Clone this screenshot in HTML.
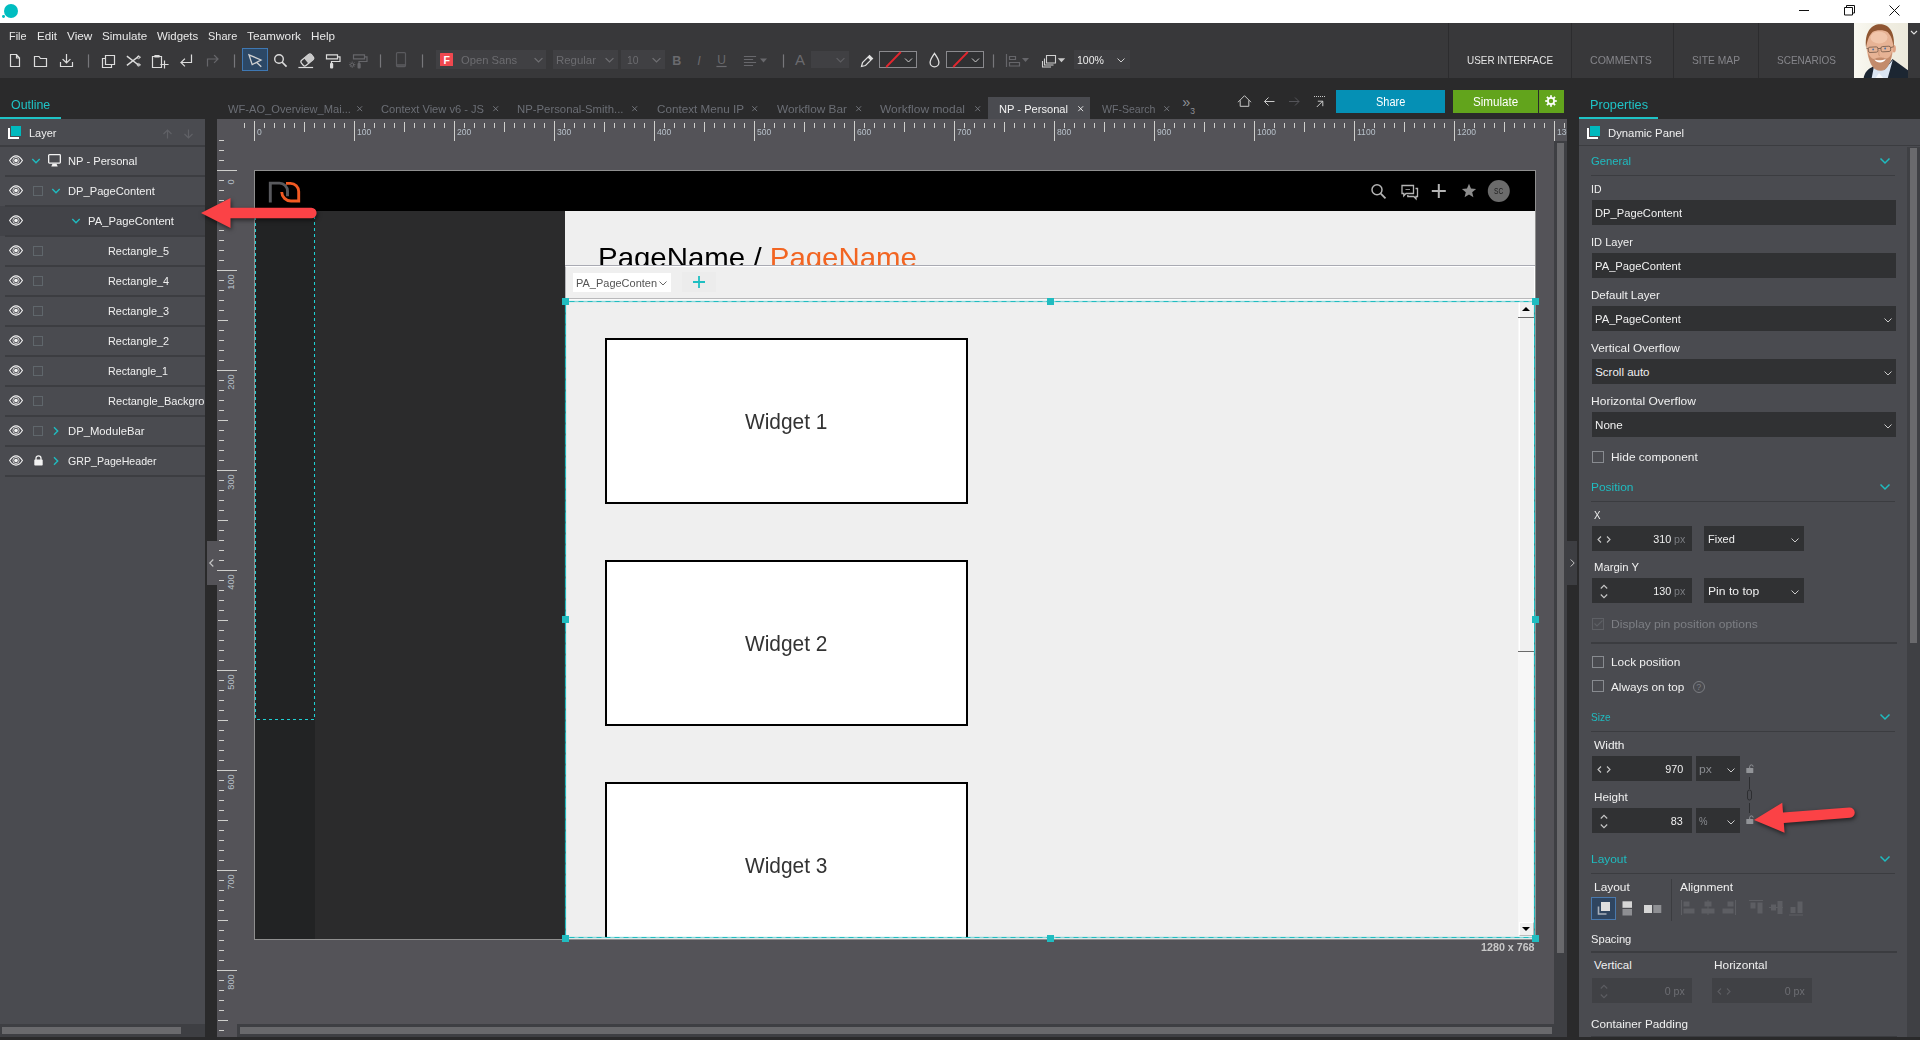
<!DOCTYPE html>
<html lang="en">
<head>
<meta charset="utf-8">
<title>NP - Personal</title>
<style>
*{box-sizing:border-box;margin:0;padding:0}
html,body{width:1920px;height:1040px;overflow:hidden;background:#2a2a2b}
body{font-family:"Liberation Sans","DejaVu Sans",sans-serif;font-size:11px;color:#e8e8e8;position:relative}
.a{position:absolute}
.t{position:absolute;white-space:nowrap;line-height:16px;height:16px;transform-origin:0 50%}
svg{position:absolute;overflow:visible}
#titlebar{left:0;top:0;width:1920px;height:23px;background:#fff}
#toolbar{left:0;top:23px;width:1920px;height:55px;background:#38383a}
#tabstrip{left:0;top:78px;width:1920px;height:41px;background:#2a2a2b}
#leftpanel{left:0;top:119px;width:205px;height:921px;background:#4a4b50;overflow:hidden}
#canvas{left:217px;top:119px;width:1350px;height:921px;background:#545358;overflow:hidden}
#rightpanel{left:1579px;top:119px;width:341px;height:921px;background:#4a4b50;overflow:hidden}
.vsep{top:23px;width:1px;height:55px;background:#2c2c2e}
</style>
</head>
<body>
<div id="titlebar" class="a"><div class="a" style="left:3.5px;top:4px;width:14px;height:14px;background:#00bdc0;border-radius:50%"></div><div class="a" style="left:2.2px;top:15px;width:2.8px;height:2.8px;background:#00bdc0;border-radius:50%"></div><svg style="left:1796px;top:0" width="120" height="23" viewBox="0 0 120 23" fill="none" stroke="#111" stroke-width="1"><path d="M3 10.500h10"/><path d="M48.500 7.500h8v7.500h-8z M50.500 7.500v-2h8v7.500h-2"/><path d="M93.500 5.500l10 10 M103.500 5.500l-10 10"/></svg></div>
<div id="toolbar" class="a"></div>
<div class="t" style="top:28.3px;font-size:11.5px;color:#e9e9e9;left:9.4px;transform:scaleX(0.944);">File</div>
<div class="t" style="top:28.3px;font-size:11.5px;color:#e9e9e9;left:37.2px;transform:scaleX(1.009);">Edit</div>
<div class="t" style="top:28.3px;font-size:11.5px;color:#e9e9e9;left:66.9px;transform:scaleX(1.024);">View</div>
<div class="t" style="top:28.3px;font-size:11.5px;color:#e9e9e9;left:101.9px;transform:scaleX(1.012);">Simulate</div>
<div class="t" style="top:28.3px;font-size:11.5px;color:#e9e9e9;left:156.9px;transform:scaleX(0.992);">Widgets</div>
<div class="t" style="top:28.3px;font-size:11.5px;color:#e9e9e9;left:207.7px;transform:scaleX(0.952);">Share</div>
<div class="t" style="top:28.3px;font-size:11.5px;color:#e9e9e9;left:247px;transform:scaleX(1.031);">Teamwork</div>
<div class="t" style="top:28.3px;font-size:11.5px;color:#e9e9e9;left:311px;transform:scaleX(1.015);">Help</div>

<svg style="left:0;top:46px" width="1140" height="28" viewBox="0 46 1140 28" fill="none" stroke="#dcdcdc" stroke-width="1.200" stroke-linecap="square">
  <path d="M10.500 54.500h6l3 3.500v8.500h-9z M16.500 54.500v3.500h3"/>
  <path d="M34.500 66.500v-10h4.500l1.500 2h6v8z"/>
  <path d="M60.500 62.500v4h12v-4 M66.500 54.500v8 M63 59.500l3.500 3.500 3.500-3.500"/>
  <path d="M88.500 55v12" stroke="#77777b"/>
  <path d="M105.500 55.500h9v9h-9z M105.500 58.500h-3v9h9v-3"/>
  <path d="M127.500 56.500l11 8.500 M138.500 56.500l-11 8.500" stroke-width="1.500"/>
  <circle cx="138.600" cy="57.300" r="1.400" stroke-width=".800"/><circle cx="138.600" cy="64.800" r="1.400" stroke-width=".800"/>
  <path d="M152.500 56.500h9v11h-9z M155 55.500h4v1.500h-4z M164.500 61v7 M161 64.500h7"/>
  <path d="M191.500 55v7.500h-10.500 M184.500 59l-3.500 3.500 3.500 3.500"/>
  <path d="M207.500 66v-7h10 M214.500 55.500l3.500 3.500-3.500 3.500" stroke="#66666a"/>
  <path d="M234.500 55v12" stroke="#77777b"/>
  <rect x="242.500" y="48.500" width="25" height="22" fill="#2c4866" stroke="#3f78b3" stroke-width="1"/>
  <path d="M249 54.800L261 60L252.200 64.600Z M256.500 62.200L261.300 66.800" stroke="#d2d2d2" stroke-linejoin="miter" stroke-linecap="butt" stroke-width="1.300"/>
  <circle cx="279" cy="59" r="4.300" stroke-width="1.400"/><path d="M282.500 62.500l3.500 3.500" stroke-width="1.600"/>
  <g transform="rotate(-40 307.300 60)"><rect x="300.800" y="56.600" width="13" height="6.800" rx="2" /><path d="M305.800 56.600h6a2 2 0 0 1 2 2v2.800a2 2 0 0 1-2 2h-6z" fill="#c9c9c9" stroke="none"/></g><path d="M299 67.500h13.500"/>
  <path d="M326.500 54.800h11v4h-11z M337.500 56.800h2.500v4.700h-8.500v2"/><rect x="330" y="63" width="3.200" height="5.600" rx="1" fill="#dcdcdc" stroke="none"/>
  <g stroke="#66666a"><path d="M353.500 54.800h11v4h-11z M364.500 56.800h2.500v4.700h-8v2"/><rect x="357.500" y="63" width="3.200" height="5.600" rx="1" fill="#66666a" stroke="none"/><circle cx="352.200" cy="64.700" r="1.600" stroke-width="1"/><path d="M352.200 61.500v1.200M352.200 66.700v1.200M349 64.700h1.200M354.200 64.700h1.200M350 62.500l.800.800M353.600 66.100l.800.800M354.400 62.500l-.800.800M350.800 66.100l-.800.800" stroke-width=".900" stroke-linecap="butt"/></g>
  <path d="M380.500 55v12" stroke="#77777b"/>
  <rect x="396.500" y="52.600" width="9" height="14" rx="1" stroke="#5a5a5e"/><path d="M397 65h8" stroke="#5a5a5e" stroke-width="1.600" stroke-linecap="butt"/>
  <path d="M422.500 55v12" stroke="#77777b"/>
  <rect x="436" y="50" width="110" height="19" fill="#404043" stroke="none"/>
  <rect x="440" y="53" width="13" height="13" rx=".500" fill="#f0484f" stroke="none"/>
  <path d="M535 58.500l3.500 3.500 3.500-3.500" stroke="#6e6e72"/>
  <rect x="553" y="50" width="65" height="19" fill="#404043" stroke="none"/>
  <path d="M606 58.500l3.500 3.500 3.500-3.500" stroke="#6e6e72"/>
  <rect x="621" y="50" width="44" height="19" fill="#404043" stroke="none"/>
  <path d="M653 58.500l3.500 3.500 3.500-3.500" stroke="#6e6e72"/>
  <path d="M717 66.500h9" stroke="#6a6a6e"/>
  <path d="M744.500 56.500h11 M744.500 59.500h8 M744.500 62.500h11 M744.500 65.500h8" stroke="#68686c"/><path d="M760 58.500h7l-3.500 4z" fill="#68686c" stroke="none"/>
  <path d="M783.500 55v12" stroke="#77777b"/>
  <rect x="811" y="51" width="38" height="17" fill="#404043" stroke="none"/>
  <path d="M837 58.500l3.500 3.500 3.500-3.500" stroke="#5e5e62"/>
  <path d="M861.500 66.500l1-4 7-7 3 3-7 7z" stroke="#e0e0e0"/><path d="M867.600 57.400l1.900-1.900 3 3-1.900 1.900z" fill="#e0e0e0" stroke="none"/>
  <rect x="879.500" y="51.500" width="37" height="16" fill="#303133" stroke="#8a8a8e" stroke-width="1"/><path d="M886.200 67l14.600-15" stroke="#e3262e" stroke-width="1.800" stroke-linecap="butt"/><path d="M905 58.500l3.500 3.500 3.500-3.500" stroke="#cfcfcf" stroke-width="1" stroke-linecap="butt"/>
  <path d="M934.500 53.400c-2.200 3.400-4.400 6.200-4.400 9a4.400 4.400 0 0 0 8.800 0c0-2.800-2.200-5.600-4.400-9z" stroke="#e0e0e0" stroke-width="1.300"/>
  <rect x="946.500" y="51.500" width="37" height="16" fill="#303133" stroke="#8a8a8e" stroke-width="1"/><path d="M953.200 67l14.600-15" stroke="#e3262e" stroke-width="1.800" stroke-linecap="butt"/><path d="M972 58.500l3.500 3.500 3.500-3.500" stroke="#cfcfcf" stroke-width="1" stroke-linecap="butt"/>
  <path d="M993.500 55v12" stroke="#77777b"/>
  <path d="M1006.500 54.500v12 M1009.500 56.500h6v3h-6z M1009.500 62.500h10v3.500h-10z" stroke="#66666a"/><path d="M1022 58h7l-3.500 4z" fill="#66666a" stroke="none"/>
  <path d="M1046.500 55.500h9v7.500h-9z M1044.500 58.500v6.500h9 M1042.500 61v6h8.500" stroke="#cfcfcf" stroke-width="1.100" stroke-linecap="butt"/><path d="M1057.800 58.200h7.400l-3.700 4.100z" fill="#c8c8c8" stroke="none"/>
  <rect x="1074" y="50" width="56" height="19" fill="#3e3e41" stroke="none"/>
  <path d="M1117.500 58.500l3.500 3.500 3.500-3.500" stroke="#cfcfcf" stroke-width="1" stroke-linecap="butt"/>
</svg>
<div class="t" style="top:51.8px;font-size:10.5px;color:#fff;font-weight:bold;left:443.4px;">F</div>
<div class="t" style="top:52px;font-size:11.5px;color:#6c6c70;left:461px;transform:scaleX(0.973);">Open Sans</div>
<div class="t" style="top:52px;font-size:11.5px;color:#6c6c70;left:556px;transform:scaleX(0.993);">Regular</div>
<div class="t" style="top:52px;font-size:11.5px;color:#6c6c70;left:627px;transform:scaleX(0.899);">10</div>
<div class="t" style="top:53px;font-size:12.5px;color:#6a6a6e;font-weight:bold;left:672.3px;">B</div>
<div class="t" style="top:53px;font-size:12.5px;color:#6a6a6e;left:697.2px;font-style:italic;">I</div>
<div class="t" style="top:52.3px;font-size:12px;color:#6a6a6e;left:717.3px;">U</div>
<div class="t" style="top:52.3px;font-size:15px;color:#6a6a6e;left:795px;">A</div>
<div class="t" style="top:52px;font-size:11.5px;color:#eee;left:1077px;transform:scaleX(0.918);">100%</div>
<div class="a vsep" style="left:1448px"></div>
<div class="a vsep" style="left:1571px"></div>
<div class="a vsep" style="left:1673px"></div>
<div class="a vsep" style="left:1758px"></div>
<div class="t" style="top:52px;font-size:11.5px;color:#e4e4e4;left:1467px;transform:scaleX(0.863);">USER INTERFACE</div>
<div class="t" style="top:52px;font-size:11.5px;color:#85858a;left:1590px;transform:scaleX(0.92);">COMMENTS</div>
<div class="t" style="top:52px;font-size:11.5px;color:#85858a;left:1692px;transform:scaleX(0.894);">SITE MAP</div>
<div class="t" style="top:52px;font-size:11.5px;color:#85858a;left:1777px;transform:scaleX(0.871);">SCENARIOS</div>
<svg style="left:1854px;top:23px" width="54" height="55" viewBox="0 0 54 55">
<defs><clipPath id="avc"><rect width="54" height="55"/></clipPath>
<filter id="avb" x="-10%" y="-10%" width="120%" height="120%"><feGaussianBlur stdDeviation=".700"/></filter>
<linearGradient id="avbg" x1="0" x2="1"><stop offset="0" stop-color="#f9f8f1"/><stop offset=".5" stop-color="#f1efe3"/><stop offset="1" stop-color="#ece9dc"/></linearGradient></defs>
<g clip-path="url(#avc)"><rect width="54" height="55" fill="url(#avbg)"/>
<g filter="url(#avb)">
<path d="M9.500 56C10.500 49 14 46 20 43L27 51L38.500 36L55 48V56Z" fill="#1c2533"/>
<path d="M20 43L17.500 56H33.500L38.800 37L30 47Z" fill="#dbe5f2"/>
<path d="M25 50L21 56H30Z" fill="#f4f7fb"/>
<ellipse cx="40" cy="25.800" rx="1.900" ry="3.700" fill="#dfa283"/>
<path d="M12.300 22C11.800 9 18 1.800 26 1.800S40.200 9 39.500 22C39.300 32 35.500 42 31.500 45.300C28.500 47.800 24 47.800 21 45.300C16 41.300 12.800 32 12.300 22Z" fill="#e7b395"/>
<ellipse cx="25" cy="14.500" rx="8.500" ry="6" fill="#f1c6ab"/>
<path d="M12.100 25C10.300 9 17.500 1.300 26 1.300S41.300 8 39.700 25C38.800 17.500 37.200 12.500 33.500 9C30 6.600 22 6.600 18.500 9C15 12.500 13.200 17.500 12.100 25Z" fill="#8f5632"/>
<path d="M14 29.500C14.500 38 18.500 45 21.500 46.600C24.500 48.300 28.500 48.300 31.500 46.300C34.800 43.300 37.800 37 38 28.500C36.500 34 33.500 36.500 30.500 35.200C28.500 34.200 23.500 34.400 21.500 35.500C18.500 37 15.800 34 14 29.500Z" fill="#b98060" opacity=".780"/>
<path d="M20.300 36.600C23 37.800 29 37.600 31.800 36C30.300 40.200 23 40.700 20.300 36.600Z" fill="#fff"/>
<path d="M25.200 27C24.800 30 24.300 32 25.800 33.200" stroke="#cf9676" stroke-width="1" fill="none"/>
</g>
<circle cx="19.200" cy="26.400" r=".950" fill="#4a76ad"/><circle cx="31.200" cy="25.500" r=".950" fill="#4a76ad"/>
<g fill="none" stroke="#6a5142" stroke-width=".750" transform="rotate(-3 25.500 26)"><rect x="14.300" y="23.700" width="9.600" height="5.300" rx="1.600"/><rect x="27" y="23.700" width="9.600" height="5.300" rx="1.600"/><path d="M23.900 25.500h3.100M14.300 25.200l-1.800-.500M36.600 25.200l3-.700"/></g>
</g></svg>
<svg style="left:1910px;top:30px" width="8" height="6" viewBox="0 0 8 6" fill="none" stroke="#e0e0e0" stroke-width="1.100"><path d="M1 1l3 3 3-3"/></svg>
<div id="tabstrip" class="a"></div>
<div class="t" style="top:97px;font-size:12.5px;color:#1fc3c6;left:11.2px;transform:scaleX(0.99);">Outline</div>
<div class="a" style="left:0px;top:117px;width:61px;height:2px;background:#1fc3c6;"></div>
<div class="t" style="top:97px;font-size:12.5px;color:#1fc3c6;left:1590px;transform:scaleX(1.018);">Properties</div>
<div class="a" style="left:1579px;top:117px;width:79px;height:2px;background:#1fc3c6;"></div>
<div class="a" style="left:988px;top:97px;width:102px;height:22px;background:#4a4b50;"></div>
<div class="t" style="top:100.7px;font-size:11.5px;color:#6b6e75;left:228px;transform:scaleX(0.967);">WF-AO_Overview_Mai...</div>
<svg style="left:356.8px;top:105.7px" width="5.400" height="5.400" viewBox="0 0 6 6" stroke="#787b81" stroke-width="1"><path d="M.300.300l5.400 5.400M5.700.300l-5.400 5.400"/></svg>
<div class="t" style="top:100.7px;font-size:11.5px;color:#6b6e75;left:381px;transform:scaleX(0.967);">Context View v6 - JS</div>
<svg style="left:493px;top:105.7px" width="5.400" height="5.400" viewBox="0 0 6 6" stroke="#787b81" stroke-width="1"><path d="M.300.300l5.400 5.400M5.700.300l-5.400 5.400"/></svg>
<div class="t" style="top:100.7px;font-size:11.5px;color:#6b6e75;left:517px;transform:scaleX(0.986);">NP-Personal-Smith...</div>
<svg style="left:632.3px;top:105.7px" width="5.400" height="5.400" viewBox="0 0 6 6" stroke="#787b81" stroke-width="1"><path d="M.300.300l5.400 5.400M5.700.300l-5.400 5.400"/></svg>
<div class="t" style="top:100.7px;font-size:11.5px;color:#6b6e75;left:657px;transform:scaleX(1.016);">Context Menu IP</div>
<svg style="left:752.3px;top:105.7px" width="5.400" height="5.400" viewBox="0 0 6 6" stroke="#787b81" stroke-width="1"><path d="M.300.300l5.400 5.400M5.700.300l-5.400 5.400"/></svg>
<div class="t" style="top:100.7px;font-size:11.5px;color:#6b6e75;left:776.7px;transform:scaleX(1.027);">Workflow Bar</div>
<svg style="left:855.6px;top:105.7px" width="5.400" height="5.400" viewBox="0 0 6 6" stroke="#787b81" stroke-width="1"><path d="M.300.300l5.400 5.400M5.700.300l-5.400 5.400"/></svg>
<div class="t" style="top:100.7px;font-size:11.5px;color:#6b6e75;left:880px;transform:scaleX(1.042);">Workflow modal</div>
<svg style="left:974.6px;top:105.7px" width="5.400" height="5.400" viewBox="0 0 6 6" stroke="#787b81" stroke-width="1"><path d="M.300.300l5.400 5.400M5.700.300l-5.400 5.400"/></svg>
<div class="t" style="top:100.7px;font-size:11.5px;color:#f2f2f2;left:999.3px;transform:scaleX(0.967);">NP - Personal</div>
<svg style="left:1077.6px;top:105.7px" width="5.400" height="5.400" viewBox="0 0 6 6" stroke="#f2f2f2" stroke-width="1"><path d="M.300.300l5.400 5.400M5.700.300l-5.400 5.400"/></svg>
<div class="t" style="top:100.7px;font-size:11.5px;color:#6b6e75;left:1102px;transform:scaleX(0.917);">WF-Search</div>
<svg style="left:1164.3px;top:105.7px" width="5.400" height="5.400" viewBox="0 0 6 6" stroke="#787b81" stroke-width="1"><path d="M.300.300l5.400 5.400M5.700.300l-5.400 5.400"/></svg>
<div class="t" style="top:94.3px;font-size:14.5px;color:#8f9299;left:1182.3px;">»</div>
<div class="t" style="top:103px;font-size:8.5px;color:#8f9299;left:1190.2px;">3</div>
<svg style="left:1230px;top:90px" width="100" height="24" viewBox="1230 90 100 24" fill="none" stroke="#c9c9c9" stroke-width="1">
  <path d="M1238 102.200l6.500-6.500 6.500 6.500 M1240.200 100.300v6h8.600v-6"/>
  <path d="M1274.500 101.500h-10 M1268.500 97.500l-4 4 4 4"/>
  <path d="M1289 101.500h10 M1295 97.500l4 4-4 4" stroke="#55555a"/>
  <path d="M1316.800 107l6-6 M1317.800 101.200h5v5"/><path d="M1314 96.500h11" stroke-dasharray="1 1"/>
</svg>
<div class="a" style="left:1336px;top:90px;width:109px;height:23px;background:#0590b5;"></div>
<div class="t" style="top:94.2px;font-size:12px;color:#fff;left:1376px;transform:scaleX(0.915);">Share</div>
<div class="a" style="left:1453px;top:90px;width:85px;height:23px;background:#62a41c;"></div>
<div class="t" style="top:94.2px;font-size:12px;color:#fff;left:1472.7px;transform:scaleX(0.97);">Simulate</div>
<div class="a" style="left:1539px;top:90px;width:25px;height:23px;background:#62a41c;"></div>
<svg style="left:1545px;top:95.300px" width="12" height="12" viewBox="-6 -6 12 12" fill="#fff"><circle r="3.100" fill="none" stroke="#fff" stroke-width="1.700"/><rect x="-.850" y="-5.800" width="1.700" height="2.400" transform="rotate(0)"/><rect x="-.850" y="-5.800" width="1.700" height="2.400" transform="rotate(45)"/><rect x="-.850" y="-5.800" width="1.700" height="2.400" transform="rotate(90)"/><rect x="-.850" y="-5.800" width="1.700" height="2.400" transform="rotate(135)"/><rect x="-.850" y="-5.800" width="1.700" height="2.400" transform="rotate(180)"/><rect x="-.850" y="-5.800" width="1.700" height="2.400" transform="rotate(225)"/><rect x="-.850" y="-5.800" width="1.700" height="2.400" transform="rotate(270)"/><rect x="-.850" y="-5.800" width="1.700" height="2.400" transform="rotate(315)"/></svg>
<div id="leftpanel" class="a">
<div class="a" style="left:0px;top:26px;width:205px;height:1.6px;background:#3c3d41;"></div>
<div class="a" style="left:11px;top:7px;width:10px;height:10px;background:#00b9be;"></div>
<div class="a" style="left:8px;top:9px;width:11px;height:11px;border-left:2px solid #fff;border-bottom:2px solid #fff"></div>
<div class="t" style="top:5.5px;font-size:11.5px;color:#f0f0f0;left:29.4px;transform:scaleX(0.956);">Layer</div>
<svg style="left:162px;top:9.500px" width="34" height="10" viewBox="0 0 34 10" fill="none" stroke="#606166" stroke-width="1.200"><path d="M5.500 9.500v-8.500 M1.500 5l4-4 4 4"/><path d="M26.500.500v8.500 M22.500 5l4 4 4-4"/></svg>
<div class="a" style="left:0px;top:87px;width:205px;height:30px;background:#424348;"></div>
<div class="a" style="left:5px;top:56px;width:200px;height:1.6px;background:#3c3d41;"></div>
<div class="a" style="left:5px;top:86px;width:200px;height:1.6px;background:#3c3d41;"></div>
<div class="a" style="left:5px;top:116px;width:200px;height:1.6px;background:#3c3d41;"></div>
<div class="a" style="left:5px;top:146px;width:200px;height:1.6px;background:#3c3d41;"></div>
<div class="a" style="left:5px;top:176px;width:200px;height:1.6px;background:#3c3d41;"></div>
<div class="a" style="left:5px;top:206px;width:200px;height:1.6px;background:#3c3d41;"></div>
<div class="a" style="left:5px;top:236px;width:200px;height:1.6px;background:#3c3d41;"></div>
<div class="a" style="left:5px;top:266px;width:200px;height:1.6px;background:#3c3d41;"></div>
<div class="a" style="left:5px;top:296px;width:200px;height:1.6px;background:#3c3d41;"></div>
<div class="a" style="left:5px;top:326px;width:200px;height:1.6px;background:#3c3d41;"></div>
<div class="a" style="left:5px;top:356px;width:200px;height:1.6px;background:#3c3d41;"></div>
<svg style="left:9px;top:35.5px" width="14" height="11" viewBox="0 0 14 11" fill="none" stroke="#f2f2f2" stroke-width="1.150"><path d="M.600 5.500C2.600 2.300 4.700.900 7 .900S11.400 2.300 13.400 5.500C11.400 8.700 9.300 10.100 7 10.100S2.600 8.700.600 5.500z"/><circle cx="7" cy="5.500" r="3.100" stroke-width=".800"/><circle cx="7" cy="5.500" r="1.800" fill="#f2f2f2" stroke="none"/></svg>
<svg style="left:31px;top:38.8px" width="10" height="6" viewBox="0 0 10 6" fill="none" stroke="#1fbcc0" stroke-width="1.400"><path d="M1.300 1l3.700 3.700L8.700 1"/></svg>
<svg style="left:48px;top:35px" width="13" height="13" viewBox="0 0 13 13" fill="none" stroke="#f2f2f2" stroke-width="1.300"><rect x=".650" y=".650" width="11.700" height="8.400" rx=".800"/><path d="M3.300 12.600h6.400l-1.200-2.800h-4z" fill="#f2f2f2" stroke="none"/></svg>
<div class="t" style="top:33.6px;font-size:11.5px;color:#f0f0f0;left:68.3px;transform:scaleX(0.97);">NP - Personal</div>
<svg style="left:9px;top:65.5px" width="14" height="11" viewBox="0 0 14 11" fill="none" stroke="#f2f2f2" stroke-width="1.150"><path d="M.600 5.500C2.600 2.300 4.700.900 7 .900S11.400 2.300 13.400 5.500C11.400 8.700 9.300 10.100 7 10.100S2.600 8.700.600 5.500z"/><circle cx="7" cy="5.500" r="3.100" stroke-width=".800"/><circle cx="7" cy="5.500" r="1.800" fill="#f2f2f2" stroke="none"/></svg>
<div class="a" style="left:33px;top:66.5px;width:10px;height:10px;border:1px solid #5f666b"></div>
<svg style="left:51px;top:68.8px" width="10" height="6" viewBox="0 0 10 6" fill="none" stroke="#1fbcc0" stroke-width="1.400"><path d="M1.300 1l3.700 3.700L8.700 1"/></svg>
<div class="t" style="top:63.6px;font-size:11.5px;color:#f0f0f0;left:68.3px;transform:scaleX(0.97);">DP_PageContent</div>
<svg style="left:9px;top:95.5px" width="14" height="11" viewBox="0 0 14 11" fill="none" stroke="#f2f2f2" stroke-width="1.150"><path d="M.600 5.500C2.600 2.300 4.700.900 7 .900S11.400 2.300 13.400 5.500C11.400 8.700 9.300 10.100 7 10.100S2.600 8.700.600 5.500z"/><circle cx="7" cy="5.500" r="3.100" stroke-width=".800"/><circle cx="7" cy="5.500" r="1.800" fill="#f2f2f2" stroke="none"/></svg>
<svg style="left:71px;top:98.8px" width="10" height="6" viewBox="0 0 10 6" fill="none" stroke="#1fbcc0" stroke-width="1.400"><path d="M1.300 1l3.700 3.700L8.700 1"/></svg>
<div class="t" style="top:93.6px;font-size:11.5px;color:#f0f0f0;left:88.2px;transform:scaleX(0.977);">PA_PageContent</div>
<svg style="left:9px;top:125.5px" width="14" height="11" viewBox="0 0 14 11" fill="none" stroke="#f2f2f2" stroke-width="1.150"><path d="M.600 5.500C2.600 2.300 4.700.900 7 .900S11.400 2.300 13.400 5.500C11.400 8.700 9.300 10.100 7 10.100S2.600 8.700.600 5.500z"/><circle cx="7" cy="5.500" r="3.100" stroke-width=".800"/><circle cx="7" cy="5.500" r="1.800" fill="#f2f2f2" stroke="none"/></svg>
<div class="a" style="left:33px;top:126.5px;width:10px;height:10px;border:1px solid #5f666b"></div>
<div class="t" style="top:123.6px;font-size:11.5px;color:#f0f0f0;left:108.3px;transform:scaleX(0.945);">Rectangle_5</div>
<svg style="left:9px;top:155.5px" width="14" height="11" viewBox="0 0 14 11" fill="none" stroke="#f2f2f2" stroke-width="1.150"><path d="M.600 5.500C2.600 2.300 4.700.900 7 .900S11.400 2.300 13.400 5.500C11.400 8.700 9.300 10.100 7 10.100S2.600 8.700.600 5.500z"/><circle cx="7" cy="5.500" r="3.100" stroke-width=".800"/><circle cx="7" cy="5.500" r="1.800" fill="#f2f2f2" stroke="none"/></svg>
<div class="a" style="left:33px;top:156.5px;width:10px;height:10px;border:1px solid #5f666b"></div>
<div class="t" style="top:153.6px;font-size:11.5px;color:#f0f0f0;left:108.3px;transform:scaleX(0.945);">Rectangle_4</div>
<svg style="left:9px;top:185.5px" width="14" height="11" viewBox="0 0 14 11" fill="none" stroke="#f2f2f2" stroke-width="1.150"><path d="M.600 5.500C2.600 2.300 4.700.900 7 .900S11.400 2.300 13.400 5.500C11.400 8.700 9.300 10.100 7 10.100S2.600 8.700.600 5.500z"/><circle cx="7" cy="5.500" r="3.100" stroke-width=".800"/><circle cx="7" cy="5.500" r="1.800" fill="#f2f2f2" stroke="none"/></svg>
<div class="a" style="left:33px;top:186.5px;width:10px;height:10px;border:1px solid #5f666b"></div>
<div class="t" style="top:183.6px;font-size:11.5px;color:#f0f0f0;left:108.3px;transform:scaleX(0.945);">Rectangle_3</div>
<svg style="left:9px;top:215.5px" width="14" height="11" viewBox="0 0 14 11" fill="none" stroke="#f2f2f2" stroke-width="1.150"><path d="M.600 5.500C2.600 2.300 4.700.900 7 .900S11.400 2.300 13.400 5.500C11.400 8.700 9.300 10.100 7 10.100S2.600 8.700.600 5.500z"/><circle cx="7" cy="5.500" r="3.100" stroke-width=".800"/><circle cx="7" cy="5.500" r="1.800" fill="#f2f2f2" stroke="none"/></svg>
<div class="a" style="left:33px;top:216.5px;width:10px;height:10px;border:1px solid #5f666b"></div>
<div class="t" style="top:213.6px;font-size:11.5px;color:#f0f0f0;left:108.3px;transform:scaleX(0.945);">Rectangle_2</div>
<svg style="left:9px;top:245.5px" width="14" height="11" viewBox="0 0 14 11" fill="none" stroke="#f2f2f2" stroke-width="1.150"><path d="M.600 5.500C2.600 2.300 4.700.900 7 .900S11.400 2.300 13.400 5.500C11.400 8.700 9.300 10.100 7 10.100S2.600 8.700.600 5.500z"/><circle cx="7" cy="5.500" r="3.100" stroke-width=".800"/><circle cx="7" cy="5.500" r="1.800" fill="#f2f2f2" stroke="none"/></svg>
<div class="a" style="left:33px;top:246.5px;width:10px;height:10px;border:1px solid #5f666b"></div>
<div class="t" style="top:243.6px;font-size:11.5px;color:#f0f0f0;left:108.3px;transform:scaleX(0.929);">Rectangle_1</div>
<svg style="left:9px;top:275.5px" width="14" height="11" viewBox="0 0 14 11" fill="none" stroke="#f2f2f2" stroke-width="1.150"><path d="M.600 5.500C2.600 2.300 4.700.900 7 .900S11.400 2.300 13.400 5.500C11.400 8.700 9.300 10.100 7 10.100S2.600 8.700.600 5.500z"/><circle cx="7" cy="5.500" r="3.100" stroke-width=".800"/><circle cx="7" cy="5.500" r="1.800" fill="#f2f2f2" stroke="none"/></svg>
<div class="a" style="left:33px;top:276.5px;width:10px;height:10px;border:1px solid #5f666b"></div>
<div class="t" style="top:273.6px;font-size:11.5px;color:#f0f0f0;left:108.3px;transform:scaleX(0.961);">Rectangle_Backgro</div>
<svg style="left:9px;top:305.5px" width="14" height="11" viewBox="0 0 14 11" fill="none" stroke="#f2f2f2" stroke-width="1.150"><path d="M.600 5.500C2.600 2.300 4.700.900 7 .900S11.400 2.300 13.400 5.500C11.400 8.700 9.300 10.100 7 10.100S2.600 8.700.600 5.500z"/><circle cx="7" cy="5.500" r="3.100" stroke-width=".800"/><circle cx="7" cy="5.500" r="1.800" fill="#f2f2f2" stroke="none"/></svg>
<div class="a" style="left:33px;top:306.5px;width:10px;height:10px;border:1px solid #5f666b"></div>
<svg style="left:52.5px;top:307px" width="6" height="10" viewBox="0 0 6 10" fill="none" stroke="#1fbcc0" stroke-width="1.400"><path d="M1 1.300l3.700 3.700L1 8.700"/></svg>
<div class="t" style="top:303.6px;font-size:11.5px;color:#f0f0f0;left:68.3px;transform:scaleX(0.981);">DP_ModuleBar</div>
<svg style="left:9px;top:335.5px" width="14" height="11" viewBox="0 0 14 11" fill="none" stroke="#f2f2f2" stroke-width="1.150"><path d="M.600 5.500C2.600 2.300 4.700.900 7 .900S11.400 2.300 13.400 5.500C11.400 8.700 9.300 10.100 7 10.100S2.600 8.700.600 5.500z"/><circle cx="7" cy="5.500" r="3.100" stroke-width=".800"/><circle cx="7" cy="5.500" r="1.800" fill="#f2f2f2" stroke="none"/></svg>
<svg style="left:33.500px;top:335.5px" width="9" height="11" viewBox="0 0 9 11" fill="none"><path d="M2 5V3.300a2.500 2.500 0 0 1 5 0V5" stroke="#f2f2f2" stroke-width="1.300"/><rect x=".300" y="4.600" width="8.400" height="6" rx=".800" fill="#f2f2f2"/></svg>
<svg style="left:52.5px;top:337px" width="6" height="10" viewBox="0 0 6 10" fill="none" stroke="#1fbcc0" stroke-width="1.400"><path d="M1 1.300l3.700 3.700L1 8.700"/></svg>
<div class="t" style="top:333.6px;font-size:11.5px;color:#f0f0f0;left:68.3px;transform:scaleX(0.923);">GRP_PageHeader</div>
<div class="a" style="left:0px;top:905px;width:205px;height:13px;background:#3e3f43;"></div>
<div class="a" style="left:2px;top:908px;width:179px;height:7px;background:#6a6a6d;"></div>
<div class="a" style="left:0px;top:918px;width:205px;height:3px;background:#2a2a2b;"></div>
</div>
<div id="canvas" class="a">
<div class="a" style="left:27px;top:4px;width:1323px;height:5px;background:none;background:repeating-linear-gradient(90deg,#cfcfcc 0 1px,transparent 1px 10px)"></div>
<div class="a" style="left:37px;top:3px;width:1313px;height:10px;background:none;background:repeating-linear-gradient(90deg,#cfcfcc 0 1px,transparent 1px 50px)"></div>
<div class="a" style="left:37px;top:2px;width:1313px;height:20px;background:none;background:repeating-linear-gradient(90deg,#cfcfcc 0 1px,transparent 1px 100px)"></div>
<div class="t" style="top:4.9px;font-size:9px;color:#b7c0c9;left:40.3px;transform:scaleX(0.95);">0</div>
<div class="t" style="top:4.9px;font-size:9px;color:#b7c0c9;left:140.3px;transform:scaleX(0.95);">100</div>
<div class="t" style="top:4.9px;font-size:9px;color:#b7c0c9;left:240.3px;transform:scaleX(0.95);">200</div>
<div class="t" style="top:4.9px;font-size:9px;color:#b7c0c9;left:340.3px;transform:scaleX(0.95);">300</div>
<div class="t" style="top:4.9px;font-size:9px;color:#b7c0c9;left:440.3px;transform:scaleX(0.95);">400</div>
<div class="t" style="top:4.9px;font-size:9px;color:#b7c0c9;left:540.3px;transform:scaleX(0.95);">500</div>
<div class="t" style="top:4.9px;font-size:9px;color:#b7c0c9;left:640.3px;transform:scaleX(0.95);">600</div>
<div class="t" style="top:4.9px;font-size:9px;color:#b7c0c9;left:740.3px;transform:scaleX(0.95);">700</div>
<div class="t" style="top:4.9px;font-size:9px;color:#b7c0c9;left:840.3px;transform:scaleX(0.95);">800</div>
<div class="t" style="top:4.9px;font-size:9px;color:#b7c0c9;left:940.3px;transform:scaleX(0.95);">900</div>
<div class="t" style="top:4.9px;font-size:9px;color:#b7c0c9;left:1040.3px;transform:scaleX(0.95);">1000</div>
<div class="t" style="top:4.9px;font-size:9px;color:#b7c0c9;left:1140.3px;transform:scaleX(0.95);">1100</div>
<div class="t" style="top:4.9px;font-size:9px;color:#b7c0c9;left:1240.3px;transform:scaleX(0.95);">1200</div>
<div class="t" style="top:4.9px;font-size:9px;color:#b7c0c9;left:1340.3px;transform:scaleX(0.95);">1300</div>
<div class="a" style="left:2px;top:21px;width:5px;height:897px;background:none;background:repeating-linear-gradient(180deg,#cfcfcc 0 1px,transparent 1px 10px)"></div>
<div class="a" style="left:1px;top:51px;width:10px;height:867px;background:none;background:repeating-linear-gradient(180deg,#cfcfcc 0 1px,transparent 1px 50px)"></div>
<div class="a" style="left:0px;top:51px;width:20px;height:867px;background:none;background:repeating-linear-gradient(180deg,#cfcfcc 0 1px,transparent 1px 100px)"></div>
<div class="t" style="left:5.7px;top:60.938px;width:16px;height:5.125px;font-size:9.500px;color:#b7c0c9;transform:none"><span style="position:absolute;left:8px;top:2.562px;display:block;line-height:16px;transform:translate(-50%,-50%) rotate(-90deg) scaleX(.97)">0</span></div>
<div class="t" style="left:5.7px;top:155.813px;width:16px;height:15.375px;font-size:9.500px;color:#b7c0c9;transform:none"><span style="position:absolute;left:8px;top:7.687px;display:block;line-height:16px;transform:translate(-50%,-50%) rotate(-90deg) scaleX(.97)">100</span></div>
<div class="t" style="left:5.7px;top:255.813px;width:16px;height:15.375px;font-size:9.500px;color:#b7c0c9;transform:none"><span style="position:absolute;left:8px;top:7.687px;display:block;line-height:16px;transform:translate(-50%,-50%) rotate(-90deg) scaleX(.97)">200</span></div>
<div class="t" style="left:5.7px;top:355.813px;width:16px;height:15.375px;font-size:9.500px;color:#b7c0c9;transform:none"><span style="position:absolute;left:8px;top:7.687px;display:block;line-height:16px;transform:translate(-50%,-50%) rotate(-90deg) scaleX(.97)">300</span></div>
<div class="t" style="left:5.7px;top:455.813px;width:16px;height:15.375px;font-size:9.500px;color:#b7c0c9;transform:none"><span style="position:absolute;left:8px;top:7.687px;display:block;line-height:16px;transform:translate(-50%,-50%) rotate(-90deg) scaleX(.97)">400</span></div>
<div class="t" style="left:5.7px;top:555.813px;width:16px;height:15.375px;font-size:9.500px;color:#b7c0c9;transform:none"><span style="position:absolute;left:8px;top:7.687px;display:block;line-height:16px;transform:translate(-50%,-50%) rotate(-90deg) scaleX(.97)">500</span></div>
<div class="t" style="left:5.7px;top:655.813px;width:16px;height:15.375px;font-size:9.500px;color:#b7c0c9;transform:none"><span style="position:absolute;left:8px;top:7.687px;display:block;line-height:16px;transform:translate(-50%,-50%) rotate(-90deg) scaleX(.97)">600</span></div>
<div class="t" style="left:5.7px;top:755.813px;width:16px;height:15.375px;font-size:9.500px;color:#b7c0c9;transform:none"><span style="position:absolute;left:8px;top:7.687px;display:block;line-height:16px;transform:translate(-50%,-50%) rotate(-90deg) scaleX(.97)">700</span></div>
<div class="t" style="left:5.7px;top:855.813px;width:16px;height:15.375px;font-size:9.500px;color:#b7c0c9;transform:none"><span style="position:absolute;left:8px;top:7.687px;display:block;line-height:16px;transform:translate(-50%,-50%) rotate(-90deg) scaleX(.97)">800</span></div>
<div class="a" style="left:1337px;top:22px;width:13px;height:896px;background:#3e3f43;"></div>
<div class="a" style="left:1340px;top:24px;width:7px;height:810px;background:#69696c;"></div>
<div class="a" style="left:20px;top:905px;width:1330px;height:13px;background:#3e3f43;"></div>
<div class="a" style="left:23px;top:908px;width:1312px;height:7px;background:#69696c;"></div>
<div class="a" style="left:0px;top:918px;width:1350px;height:3px;background:#2a2a2b;"></div>
<div class="a" style="left:37px;top:51px;width:1282px;height:770px;background:#8f8f8f;"></div>
<div class="a" style="left:38px;top:52px;width:1280px;height:40px;background:#000;"></div>
<div class="a" style="left:38px;top:92px;width:60px;height:728px;background:#222324;"></div>
<div class="a" style="left:98px;top:92px;width:250px;height:728px;background:#2b2b2c;"></div>
<div class="a" style="left:348px;top:92px;width:970px;height:728px;background:#efefef;"></div>
<svg style="left:51px;top:61px" width="34" height="24" viewBox="268 180 34 24" fill="none" stroke-width="2.900"><path d="M270.300 202.500V183.100H279.500A8 8 0 0 1 287.500 191.100V196.200" stroke="#58595d"/><path d="M286 183.400H290.500A8.200 8.200 0 0 1 298.700 191.600V201H291A9.300 9.300 0 0 1 281.700 192" stroke="#f25a22" stroke-linejoin="miter"/></svg>
<svg style="left:1148px;top:59px" width="150" height="26" viewBox="1365 178 150 26" fill="none" stroke="#b4b4b4"><circle cx="1377" cy="189.800" r="5" stroke-width="1.500"/><path d="M1380.800 193.600L1385.500 198.300" stroke-width="1.800"/><path d="M1402 185.500h11.500v8h-7.500l-2.200 2.300v-2.300h-1.800z" stroke-width="1.300"/><path d="M1415.500 188.500h2v8h-1.500v2.300l-2.200-2.300h-6v-1.500" stroke-width="1.300"/><path d="M1405.500 189.500h4.500" stroke-width="1" stroke="#8a8a8a"/><path d="M1438.800 184v14M1431.800 191h14" stroke-width="2"/><path d="M1469 183.800l2 4.700 5.100.4-3.900 3.300 1.200 5-4.400-2.700-4.400 2.700 1.200-5-3.900-3.300 5.100-.4z" fill="#8c8c8c" stroke="none"/><circle cx="1498.800" cy="191" r="11" fill="#6b6b6b" stroke="none"/></svg>
<div class="t" style="top:64.2px;font-size:8.5px;color:#1e1e1e;left:1277.4px;transform:scaleX(0.779);">SC</div>
<div class="a" style="left:348px;top:92px;width:970px;height:54px;overflow:hidden"><div class="t" style="left:33.200px;top:26.5px;height:40px;line-height:40px;font-size:28px;color:#000;transform:scaleX(1.051)">PageName / <span style="color:#f26522">PageName</span></div></div>
<div class="a" style="left:348px;top:146px;width:970px;height:1px;background:#a9aab3;"></div>
<div class="a" style="left:348px;top:147px;width:970px;height:33px;background:#efefef;border:1px solid #fff;border-bottom:0;border-left:1px solid #b5b5b8"></div>
<div class="a" style="left:348px;top:179px;width:970px;height:1px;background:#b9b9bb;"></div>
<div class="a" style="left:348px;top:180px;width:970px;height:2px;background:#fafafa;"></div>
<div class="a" style="left:356px;top:154px;width:98px;height:19px;background:#fff;"></div>
<div class="t" style="top:156.3px;font-size:11.5px;color:#555;left:359.3px;transform:scaleX(0.955);">PA_PageConten</div>
<svg style="left:442px;top:162px" width="8" height="5" viewBox="0 0 8 5" fill="none" stroke="#666" stroke-width="1"><path d="M.500.500l3.500 3.500L7.500.500"/></svg>
<div class="a" style="left:465px;top:153px;width:34px;height:20px;background:#ececec;"></div>
<svg style="left:476px;top:157px" width="12" height="12" viewBox="0 0 12 12" stroke="#1fbfc2" stroke-width="1.800"><path d="M6 0v12M0 6h12"/></svg>
<div class="a" style="left:348px;top:182px;width:970px;height:637px;overflow:hidden">
<div class="a" style="left:40px;top:37px;width:363px;height:166px;background:#fff;border:2px solid #000"></div>
<div class="t" style="top:113px;font-size:22px;color:#333;left:180.25px;transform:scaleX(0.95);height:30px;line-height:30px;margin-top:-7px;">Widget 1</div>
<div class="a" style="left:40px;top:259px;width:363px;height:166px;background:#fff;border:2px solid #000"></div>
<div class="t" style="top:335px;font-size:22px;color:#333;left:180.25px;transform:scaleX(0.95);height:30px;line-height:30px;margin-top:-7px;">Widget 2</div>
<div class="a" style="left:40px;top:481px;width:363px;height:166px;background:#fff;border:2px solid #000"></div>
<div class="t" style="top:557px;font-size:22px;color:#333;left:180.25px;transform:scaleX(0.95);height:30px;line-height:30px;margin-top:-7px;">Widget 3</div>
<div class="a" style="left:953px;top:1px;width:16px;height:635px;background:#f7f7f7;"></div>
<div class="a" style="left:954px;top:1px;width:15px;height:15px;background:#f0f0f0;border-left:1px solid #fff"></div>
<div class="a" style="left:953px;top:16px;width:16px;height:1px;background:#6b6b6b;"></div>
<div class="a" style="left:954px;top:17px;width:15px;height:333px;background:#f0f0f0;border-left:1px solid #fff;border-right:1px solid #fff"></div>
<div class="a" style="left:953px;top:350px;width:16px;height:1px;background:#6b6b6b;"></div>
<div class="a" style="left:954px;top:621px;width:15px;height:14px;background:#f0f0f0;border:1px solid #fff;border-right-color:#bbb;border-bottom-color:#bbb"></div>
<svg style="left:956.5px;top:6px" width="8" height="4" viewBox="0 0 8 4" fill="#000"><path d="M0 4L4 0L8 4z"/></svg>
<svg style="left:956.5px;top:626px" width="8" height="4" viewBox="0 0 8 4" fill="#000"><path d="M0 0L4 4L8 0z"/></svg>
</div>
<svg style="left:343px;top:177px" width="985" height="650" viewBox="560 296 985 650" fill="none"><rect x="565.500" y="301.500" width="969" height="636" stroke="#20bcc0" stroke-width="1.200"/><path d="M565.500 301.500h969M565.500 937.500h969" stroke="#f2f2f2" stroke-width="1" stroke-dasharray="4 5" opacity=".500"/><path d="M565.500 301.500v636M1534.500 301.500v636" stroke="#3d6f73" stroke-width="1" stroke-dasharray="2 9" opacity=".600"/><rect x="562" y="298" width="7" height="7" fill="#20bcc0"/><rect x="1047" y="298" width="7" height="7" fill="#20bcc0"/><rect x="1532" y="298" width="7" height="7" fill="#20bcc0"/><rect x="562" y="616" width="7" height="7" fill="#20bcc0"/><rect x="1532" y="616" width="7" height="7" fill="#20bcc0"/><rect x="562" y="935" width="7" height="7" fill="#20bcc0"/><rect x="1047" y="935" width="7" height="7" fill="#20bcc0"/><rect x="1532" y="935" width="7" height="7" fill="#20bcc0"/></svg>
<svg style="left:33px;top:86px" width="70" height="520" viewBox="250 205 70 520" fill="none"><path d="M255.500 211V719.500H314.500V211" stroke="#1fd0d3" stroke-width="1.050" stroke-dasharray="3 3"/></svg>
<div class="t" style="top:820.3px;font-size:10.5px;color:#c8c8c8;font-weight:bold;right:32px;transform-origin:100% 50%;transform:scaleX(1.018);">1280 x 768</div>
</div>
<div id="rightpanel" class="a">
<div class="a" style="left:11px;top:7px;width:10px;height:10px;background:#00b9be;"></div>
<div class="a" style="left:8px;top:9px;width:11px;height:11px;border-left:2px solid #fff;border-bottom:2px solid #fff"></div>
<div class="t" style="top:6.3px;font-size:11.5px;color:#f0f0f0;left:29.2px;transform:scaleX(0.983);">Dynamic Panel</div>
<div class="a" style="left:0px;top:26px;width:341px;height:1.4px;background:#3b3c40;"></div>
<div class="a" style="left:328px;top:28px;width:13px;height:890px;background:#3f4044;"></div>
<div class="a" style="left:331px;top:29px;width:7px;height:495px;background:#6a6a6d;"></div>
<div class="t" style="top:34px;font-size:11.5px;color:#1fbcc0;left:12px;transform:scaleX(0.978);">General</div><svg style="left:301px;top:38.7px" width="10" height="6" viewBox="0 0 10 6" fill="none" stroke="#1fbcc0" stroke-width="1.5"><path d="M.500.500L5 5L9.5 .500"/></svg><div class="a" style="left:12px;top:56px;width:304px;height:1.3px;background:#3b3c40;"></div>
<div class="t" style="top:62.3px;font-size:11.5px;color:#f0f0f0;left:12.2px;transform:scaleX(0.913);">ID</div>
<div class="a" style="left:13px;top:81px;width:304px;height:25px;background:#303133;"></div>
<div class="t" style="top:86.3px;font-size:11.5px;color:#f0f0f0;left:16.2px;transform:scaleX(0.972);">DP_PageContent</div>
<div class="t" style="top:115px;font-size:11.5px;color:#f0f0f0;left:12.2px;transform:scaleX(0.962);">ID Layer</div>
<div class="a" style="left:13px;top:134px;width:304px;height:25px;background:#303133;"></div>
<div class="t" style="top:139.3px;font-size:11.5px;color:#f0f0f0;left:16.2px;transform:scaleX(0.975);">PA_PageContent</div>
<div class="t" style="top:168px;font-size:11.5px;color:#f0f0f0;left:12.2px;transform:scaleX(1.006);">Default Layer</div>
<div class="a" style="left:13px;top:187px;width:304px;height:25px;background:#303133;"></div>
<div class="t" style="top:192.3px;font-size:11.5px;color:#f0f0f0;left:16.2px;transform:scaleX(0.975);">PA_PageContent</div>
<svg style="left:304.5px;top:199px" width="8" height="5" viewBox="0 0 8 5" fill="none" stroke="#cbcbcb" stroke-width="1"><path d="M.500.500L4 4L7.5 .500"/></svg>
<div class="t" style="top:221px;font-size:11.5px;color:#f0f0f0;left:12.2px;transform:scaleX(1.029);">Vertical Overflow</div>
<div class="a" style="left:13px;top:240px;width:304px;height:25px;background:#303133;"></div>
<div class="t" style="top:245.2px;font-size:11.5px;color:#f0f0f0;left:16.2px;">Scroll auto</div>
<svg style="left:304.5px;top:252px" width="8" height="5" viewBox="0 0 8 5" fill="none" stroke="#cbcbcb" stroke-width="1"><path d="M.500.500L4 4L7.5 .500"/></svg>
<div class="t" style="top:274.2px;font-size:11.5px;color:#f0f0f0;left:12.2px;transform:scaleX(1.046);">Horizontal Overflow</div>
<div class="a" style="left:13px;top:293px;width:304px;height:25px;background:#303133;"></div>
<div class="t" style="top:298.2px;font-size:11.5px;color:#f0f0f0;left:16.2px;transform:scaleX(1.011);">None</div>
<svg style="left:304.5px;top:305px" width="8" height="5" viewBox="0 0 8 5" fill="none" stroke="#cbcbcb" stroke-width="1"><path d="M.500.500L4 4L7.5 .500"/></svg>
<div class="a" style="left:13px;top:331.5px;width:12px;height:12px;border:1px solid #888b90"></div>
<div class="t" style="top:330.2px;font-size:11.5px;color:#f0f0f0;left:32.2px;transform:scaleX(1.036);">Hide component</div>
<div class="t" style="top:360px;font-size:11.5px;color:#1fbcc0;left:12px;transform:scaleX(1.039);">Position</div><svg style="left:301px;top:364.7px" width="10" height="6" viewBox="0 0 10 6" fill="none" stroke="#1fbcc0" stroke-width="1.5"><path d="M.500.500L5 5L9.5 .500"/></svg><div class="a" style="left:12px;top:382px;width:304px;height:1.3px;background:#3b3c40;"></div>
<div class="t" style="top:388.2px;font-size:11.5px;color:#f0f0f0;left:14.8px;transform:scaleX(0.847);">X</div>
<div class="a" style="left:13px;top:407px;width:100px;height:25px;background:#303133;"></div>
<svg style="left:18px;top:416.5px" width="14" height="7" viewBox="0 0 14 7" fill="none" stroke="#c8c8c8" stroke-width="1.100"><path d="M4 .500L1 3.500L4 6.500M10 .500L13 3.500L10 6.500"/></svg>
<div class="t" style="top:412.3px;font-size:11.5px;color:#f0f0f0;right:249px;transform-origin:100% 50%;transform:scaleX(0.938);">310</div>
<div class="t" style="top:412.3px;font-size:11.5px;color:#7a7c81;left:94.8px;transform:scaleX(0.93);">px</div>
<div class="a" style="left:125px;top:407px;width:100px;height:25px;background:#303133;"></div>
<div class="t" style="top:412.3px;font-size:11.5px;color:#f0f0f0;left:128.5px;transform:scaleX(0.953);">Fixed</div>
<svg style="left:212px;top:419px" width="8" height="5" viewBox="0 0 8 5" fill="none" stroke="#cbcbcb" stroke-width="1"><path d="M.500.500L4 4L7.5 .500"/></svg>
<div class="t" style="top:440.2px;font-size:11.5px;color:#f0f0f0;left:15.2px;transform:scaleX(0.982);">Margin Y</div>
<div class="a" style="left:13px;top:459px;width:100px;height:25px;background:#303133;"></div>
<svg style="left:20.5px;top:464.5px" width="8" height="15" viewBox="0 0 8 15" fill="none" stroke="#c8c8c8" stroke-width="1.100"><path d="M.800 4.500L4 1.300L7.200 4.500M.800 10.500L4 13.700L7.200 10.500"/></svg>
<div class="t" style="top:464.3px;font-size:11.5px;color:#f0f0f0;right:249px;transform-origin:100% 50%;transform:scaleX(0.938);">130</div>
<div class="t" style="top:464.3px;font-size:11.5px;color:#7a7c81;left:94.8px;transform:scaleX(0.93);">px</div>
<div class="a" style="left:125px;top:459px;width:100px;height:25px;background:#303133;"></div>
<div class="t" style="top:464.3px;font-size:11.5px;color:#f0f0f0;left:128.5px;transform:scaleX(1.056);">Pin to top</div>
<svg style="left:212px;top:471px" width="8" height="5" viewBox="0 0 8 5" fill="none" stroke="#cbcbcb" stroke-width="1"><path d="M.500.500L4 4L7.5 .500"/></svg>
<div class="a" style="left:13px;top:498.5px;width:12px;height:12px;border:1px solid #5e6065"></div><svg style="left:15px;top:501px" width="9" height="7" viewBox="0 0 9 7" fill="none" stroke="#5e6065" stroke-width="1.100"><path d="M.500 3.500l2.500 2.500L8.500.500"/></svg>
<div class="t" style="top:497.3px;font-size:11.5px;color:#7d7f84;left:32.2px;transform:scaleX(1.053);">Display pin position options</div>
<div class="a" style="left:12px;top:523px;width:306px;height:1.5px;background:#3b3c40;"></div>
<div class="a" style="left:13px;top:536.5px;width:12px;height:12px;border:1px solid #888b90"></div>
<div class="t" style="top:535.3px;font-size:11.5px;color:#f0f0f0;left:32.2px;transform:scaleX(1.032);">Lock position</div>
<div class="a" style="left:13px;top:560.5px;width:12px;height:12px;border:1px solid #888b90"></div>
<div class="t" style="top:559.5px;font-size:11.5px;color:#f0f0f0;left:32.2px;transform:scaleX(1.024);">Always on top</div>
<div class="a" style="left:113.5px;top:561.8px;width:12px;height:12px;border:1px solid #7b7d82;border-radius:50%"></div>
<div class="t" style="top:559.9px;font-size:9px;color:#7b7d82;left:117.3px;">?</div>
<div class="t" style="top:590px;font-size:11.5px;color:#1fbcc0;left:12px;transform:scaleX(0.872);">Size</div><svg style="left:301px;top:594.7px" width="10" height="6" viewBox="0 0 10 6" fill="none" stroke="#1fbcc0" stroke-width="1.5"><path d="M.500.500L5 5L9.5 .500"/></svg><div class="a" style="left:12px;top:612px;width:304px;height:1.3px;background:#3b3c40;"></div>
<div class="t" style="top:618.2px;font-size:11.5px;color:#f0f0f0;left:15px;transform:scaleX(1.038);">Width</div>
<div class="a" style="left:13px;top:637px;width:100px;height:25px;background:#303133;"></div>
<svg style="left:18px;top:646.5px" width="14" height="7" viewBox="0 0 14 7" fill="none" stroke="#c8c8c8" stroke-width="1.100"><path d="M4 .500L1 3.500L4 6.500M10 .500L13 3.500L10 6.500"/></svg>
<div class="t" style="top:642.3px;font-size:11.5px;color:#f0f0f0;right:237px;transform-origin:100% 50%;transform:scaleX(0.938);">970</div>
<div class="a" style="left:117px;top:637px;width:44px;height:25px;background:#303133;"></div>
<div class="t" style="top:642.3px;font-size:11.5px;color:#8a8c91;left:120.2px;transform:scaleX(1.054);">px</div>
<svg style="left:148.2px;top:649px" width="8" height="5" viewBox="0 0 8 5" fill="none" stroke="#cbcbcb" stroke-width="1"><path d="M.500.500L4 4L7.5 .500"/></svg>
<div class="t" style="top:670.2px;font-size:11.5px;color:#f0f0f0;left:15px;transform:scaleX(1.017);">Height</div>
<div class="a" style="left:13px;top:689px;width:100px;height:25px;background:#303133;"></div>
<svg style="left:20.5px;top:694.5px" width="8" height="15" viewBox="0 0 8 15" fill="none" stroke="#c8c8c8" stroke-width="1.100"><path d="M.800 4.500L4 1.300L7.200 4.500M.800 10.500L4 13.700L7.200 10.500"/></svg>
<div class="t" style="top:694.3px;font-size:11.5px;color:#f0f0f0;right:237px;transform-origin:100% 50%;transform:scaleX(0.938);">83</div>
<div class="a" style="left:117px;top:689px;width:44px;height:25px;background:#303133;"></div>
<div class="t" style="top:694.3px;font-size:10.5px;color:#8a8c91;left:120.2px;transform:scaleX(0.91);">%</div>
<svg style="left:148.2px;top:701px" width="8" height="5" viewBox="0 0 8 5" fill="none" stroke="#cbcbcb" stroke-width="1"><path d="M.500.500L4 4L7.5 .500"/></svg>
<svg style="left:166.5px;top:645px" width="8" height="9" viewBox="0 0 8 9" fill="none"><path d="M4.300 4V2.600a1.700 1.700 0 0 1 3.400 0" stroke="#929498" stroke-width="1" transform="translate(-.600 0)"/><rect x=".300" y="4" width="7" height="5" rx=".600" fill="#929498"/></svg>
<svg style="left:166.5px;top:696.3px" width="8" height="9" viewBox="0 0 8 9" fill="none"><path d="M4.300 4V2.600a1.700 1.700 0 0 1 3.400 0" stroke="#929498" stroke-width="1" transform="translate(-.600 0)"/><rect x=".300" y="4" width="7" height="5" rx=".600" fill="#929498"/></svg>
<svg style="left:167px;top:657px" width="8" height="38" viewBox="0 0 8 38" fill="none" stroke="#2d2e31" stroke-width="1"><path d="M3.500 1v12M3.500 27v10"/><rect x="1.500" y="14" width="4" height="10" rx="2"/></svg>
<div class="t" style="top:732px;font-size:11.5px;color:#1fbcc0;left:12px;transform:scaleX(1.037);">Layout</div><svg style="left:301px;top:736.7px" width="10" height="6" viewBox="0 0 10 6" fill="none" stroke="#1fbcc0" stroke-width="1.5"><path d="M.500.500L5 5L9.5 .500"/></svg><div class="a" style="left:12px;top:754px;width:304px;height:1.3px;background:#3b3c40;"></div>
<div class="t" style="top:760.2px;font-size:11.5px;color:#f0f0f0;left:15px;transform:scaleX(1.037);">Layout</div>
<div class="t" style="top:760.2px;font-size:11.5px;color:#f0f0f0;left:101px;transform:scaleX(1.036);">Alignment</div>
<div class="a" style="left:92px;top:760px;width:1.2px;height:42px;background:#3b3c40;"></div>
<div class="a" style="left:12px;top:778px;width:25px;height:23px;background:#2f4560;border:1px solid #4a79ad"></div>
<svg style="left:12px;top:778px" width="75" height="23" viewBox="1591 897 75 23"><path d="M1598.500 906.500v7.500h8" fill="none" stroke="#a9b0ba" stroke-width="1.600"/><rect x="1601" y="902" width="9" height="9" fill="#dedede"/><rect x="1622.500" y="901.300" width="9.500" height="6.500" fill="#d6d6d6"/><rect x="1622.500" y="909" width="9.500" height="6.500" fill="#8e8f93"/><rect x="1644" y="905" width="8" height="8" fill="#d6d6d6"/><rect x="1653.300" y="905" width="8" height="8" fill="#8e8f93"/></svg>
<svg style="left:101px;top:780px" width="126" height="18" viewBox="1680 899 126 18" fill="#5d5e63" stroke="none"><rect x="1681" y="900" width="1" height="15"/><rect x="1683.500" y="901.500" width="6" height="5"/><rect x="1683.500" y="908.500" width="11" height="5"/><rect x="1707.500" y="900" width="1" height="15"/><rect x="1704.500" y="901.500" width="7" height="5"/><rect x="1701.500" y="908.500" width="13" height="5"/><rect x="1735" y="900" width="1" height="15"/><rect x="1727.500" y="901.500" width="6" height="5"/><rect x="1722.500" y="908.500" width="11" height="5"/><rect x="1749" y="900" width="14" height="1"/><rect x="1750.500" y="902.500" width="5" height="6"/><rect x="1757.500" y="902.500" width="5" height="11"/><rect x="1769" y="907" width="14" height="1"/><rect x="1771" y="904.500" width="5" height="6"/><rect x="1777.500" y="901" width="5" height="13"/><rect x="1789" y="914.500" width="14" height="1"/><rect x="1790.500" y="907" width="5" height="6"/><rect x="1797.500" y="901.500" width="5" height="11.500"/></svg>
<div class="t" style="top:812.3px;font-size:11.5px;color:#f0f0f0;left:12px;transform:scaleX(0.97);">Spacing</div>
<div class="a" style="left:12px;top:832px;width:306px;height:1.5px;background:#3b3c40;"></div>
<div class="t" style="top:838.2px;font-size:11.5px;color:#f0f0f0;left:15px;">Vertical</div>
<div class="t" style="top:838.2px;font-size:11.5px;color:#f0f0f0;left:135.2px;transform:scaleX(1.03);">Horizontal</div>
<div class="a" style="left:13px;top:859px;width:100px;height:25px;background:#404145;"></div>
<svg style="left:20.5px;top:864.5px" width="8" height="15" viewBox="0 0 8 15" fill="none" stroke="#5c5d62" stroke-width="1.100"><path d="M.800 4.500L4 1.300L7.200 4.500M.800 10.500L4 13.700L7.200 10.500"/></svg>
<div class="t" style="top:864.3px;font-size:11.5px;color:#6d6e73;right:235px;transform-origin:100% 50%;transform:scaleX(0.92);">0 px</div>
<div class="a" style="left:133px;top:859px;width:100px;height:25px;background:#404145;"></div>
<svg style="left:138px;top:868.5px" width="14" height="7" viewBox="0 0 14 7" fill="none" stroke="#5c5d62" stroke-width="1.100"><path d="M4 .500L1 3.500L4 6.500M10 .500L13 3.500L10 6.500"/></svg>
<div class="t" style="top:864.3px;font-size:11.5px;color:#6d6e73;right:115px;transform-origin:100% 50%;transform:scaleX(0.92);">0 px</div>
<div class="t" style="top:897.3px;font-size:11.5px;color:#f0f0f0;left:12px;transform:scaleX(1.018);">Container Padding</div>
<div class="a" style="left:12px;top:916.5px;width:306px;height:1.5px;background:#3b3c40;"></div>
<div class="a" style="left:0px;top:918px;width:341px;height:3px;background:#2a2a2b;"></div>
</div>
<div class="a" style="left:207px;top:541px;width:10px;height:44px;background:#545358;"></div>
<svg style="left:208.600px;top:559px" width="5" height="8" viewBox="0 0 5 8" fill="none" stroke="#c4c4c4" stroke-width="1.150"><path d="M4.300.500L.800 4L4.300 7.500"/></svg>
<div class="a" style="left:1567px;top:541px;width:10px;height:44px;background:#3d3e42;"></div>
<svg style="left:1569.500px;top:559px" width="5" height="8" viewBox="0 0 5 8" fill="none" stroke="#c4c4c4" stroke-width="1"><path d="M.700.500L4.200 4L.700 7.500"/></svg>
<div class="a" style="left:205px;top:1037px;width:12px;height:3px;background:#2a2a2b;"></div>
<svg style="left:201.4px;top:213.2px;filter:drop-shadow(1px 2px 2px rgba(0,0,0,.550))" width="1" height="1" viewBox="0 0 1 1"><path d="M0 0L29.5 -15V-5.2H110.4A5.2 5.2 0 0 1 110.4 5.2H29.5V15Z" fill="#fb4246" transform="rotate(0)"/></svg>
<svg style="left:1753.6px;top:819.8px;filter:drop-shadow(1px 2px 2px rgba(0,0,0,.550))" width="1" height="1" viewBox="0 0 1 1"><path d="M0 0L29.5 -15V-5.2H95.8A5.2 5.2 0 0 1 95.8 5.2H29.5V15Z" fill="#fb4246" transform="rotate(-4.4)"/></svg>
</body>
</html>
